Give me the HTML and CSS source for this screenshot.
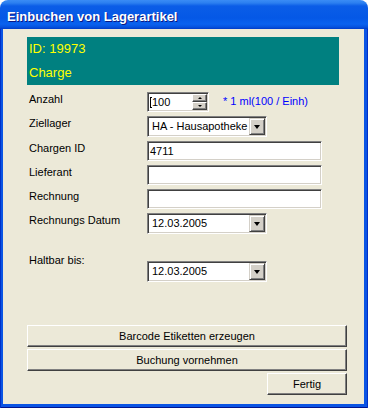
FILE: index.html
```
<!DOCTYPE html>
<html lang="de">
<head>
    <meta charset="UTF-8">
    <title>Einbuchen von Lagerartikel</title>
    <link rel="stylesheet" href="styles.css">
</head>
<body>
    <div class="window">
        <div class="titlebar">Einbuchen von Lagerartikel</div>
        <div class="frame">
            <div class="client">
                <div class="info">
                    <div>ID: 19973</div>
                    <div>Charge</div>
                </div>

                <div class="form">
                    <div class="row">
                        <label>Anzahl</label>
                        <div class="spin sunken">
                            <span class="value"><span class="caret"></span>100</span>
                            <span class="spin_btns">
                                <span class="spin_btn"><i class="arr_up"></i></span>
                                <span class="spin_btn"><i class="arr_down"></i></span>
                            </span>
                        </div>
                        <span class="unit">* 1 ml(100 / Einh)</span>
                    </div>
                    <div class="row">
                        <label>Ziellager</label>
                        <div class="combo sunken">
                            <span class="value">HA - Hausapotheke</span>
                            <span class="drop_btn"><i class="arr_drop"></i></span>
                        </div>
                    </div>
                    <div class="row">
                        <label>Chargen ID</label>
                        <div class="field sunken">4711</div>
                    </div>
                    <div class="row">
                        <label>Lieferant</label>
                        <div class="field sunken"></div>
                    </div>
                    <div class="row">
                        <label>Rechnung</label>
                        <div class="field sunken"></div>
                    </div>
                    <div class="row">
                        <label>Rechnungs Datum</label>
                        <div class="combo date sunken">
                            <span class="value">12.03.2005</span>
                            <span class="drop_btn"><i class="arr_drop"></i></span>
                        </div>
                    </div>
                    <div class="row haltbar">
                        <label>Haltbar bis:</label>
                        <div class="combo date sunken">
                            <span class="value">12.03.2005</span>
                            <span class="drop_btn"><i class="arr_drop"></i></span>
                        </div>
                    </div>
                </div>

                <div class="actions">
                    <button type="button" class="btn">Barcode Etiketten erzeugen</button>
                    <button type="button" class="btn">Buchung vornehmen</button>
                    <button type="button" class="btn btn_small">Fertig</button>
                </div>
            </div>
        </div>
    </div>
</body>
</html>
```

FILE: styles.css
```
*{
    margin:0;
    padding:0;
    box-sizing: border-box;
}
body{
    background: #fff;
    font-family: "Liberation Sans", Arial, sans-serif;
    font-size: 11px;
    color: #000;
}
.window{
    width:368px;
    height:408px;
    display: flex;
    flex-direction: column;
}
.titlebar{
    height:29px;
    padding: 10px 0 0 7px;
    border-radius: 8px 8px 0 0;
    background: linear-gradient(#3a8cf5 0px, #2b7ff0 3px, #0b5de7 6px, #0558e6 18px, #0a62ef 24px, #0653df 27px, #003bc8 29px);
    color: #fff;
    font-weight: bold;
    font-size: 13px;
    line-height: 13px;
    text-shadow: 1px 1px #0a1883;
}
.frame{
    flex: 1;
    padding: 0 4px 4px 3px;
    background: #0a54e4;
    box-shadow: inset 1px 0 #0030c8, inset -1px 0 #0030c8, inset 0 -1px #00138c;
}
.client{
    height:100%;
    background: #ece9d8;
    padding: 8px 0 0 24px;
}

/* gruenes feld oben */
.info{
    width:312px;
    height:48px;
    background: #008080;
    color: #ffff00;
    font-size: 13px;
    line-height: 24px;
    padding-left: 2px;
}

.form{
    margin-top:7px;
    display: flex;
    flex-direction: column;
    gap:4px;
}
.row{
    display: flex;
    align-items: flex-start;
}
.row label{
    width:120px;
    padding: 1px 0 0 2px;
    line-height: 13px;
}
.haltbar{
    margin-top:15px;
}
.haltbar .combo{
    margin-top:8px;
}

.sunken{
    background: #fff;
    border:1px solid;
    border-color: #808080 #fff #fff #808080;
    box-shadow: inset 1px 1px #404040, inset -1px -1px #d4d0c8;
}
.field{
    width:175px;
    height:20px;
    padding-left:2px;
    line-height: 18px;
}
.combo{
    width:120px;
    height:21px;
    display: flex;
    padding:1px;
}
.combo .value{
    flex:1;
    padding-left:3px;
    line-height: 17px;
}
.date{
    width:120px;
}
.drop_btn{
    width:16px;
    height:17px;
    background: #d4d0c8;
    border:1px solid;
    border-color: #d4d0c8 #404040 #404040 #d4d0c8;
    box-shadow: inset 1px 1px #fff, inset -1px -1px #808080;
    display: flex;
    align-items: center;
    justify-content: center;
}
.arr_drop{
    width:1px;
    border-left:3px solid transparent;
    border-right:3px solid transparent;
    border-top:4px solid #000;
    margin-top:1px;
}

.spin{
    width:62px;
    height:20px;
    display: flex;
    padding:1px;
}
.spin .value{
    flex:1;
    line-height: 16px;
    display: flex;
    align-items: center;
}
.caret{
    width:2px;
    height:11px;
    margin-left:1px;
    border-left:1px solid #000;
    border-top:1px solid #000;
    border-bottom:1px solid #000;
}
.spin_btns{
    width:15px;
    display: flex;
    flex-direction: column;
}
.spin_btn{
    height:8px;
    background: #d4d0c8;
    border:1px solid;
    border-color: #fff #404040 #404040 #fff;
    box-shadow: inset -1px -1px #808080;
    display: flex;
    align-items: center;
    justify-content: center;
}
.arr_up{
    width:1px;
    border-left:2px solid transparent;
    border-right:2px solid transparent;
    border-bottom:2px solid #000;
}
.arr_down{
    width:1px;
    border-left:2px solid transparent;
    border-right:2px solid transparent;
    border-top:2px solid #000;
}
.unit{
    margin-left:14px;
    padding-top:3px;
    line-height: 13px;
    color: #0000ff;
}

.actions{
    margin-top:43px;
    width:320px;
    display: flex;
    flex-direction: column;
    gap:2px;
}
.btn{
    height:22px;
    background: #ece9d8;
    border:1px solid;
    border-color: #fff #404040 #404040 #fff;
    box-shadow: inset -1px -1px #808080;
    font-family: "Liberation Sans", Arial, sans-serif;
    font-size: 11px;
    color: #000;
}
.btn_small{
    width:80px;
    align-self: flex-end;
}
```
